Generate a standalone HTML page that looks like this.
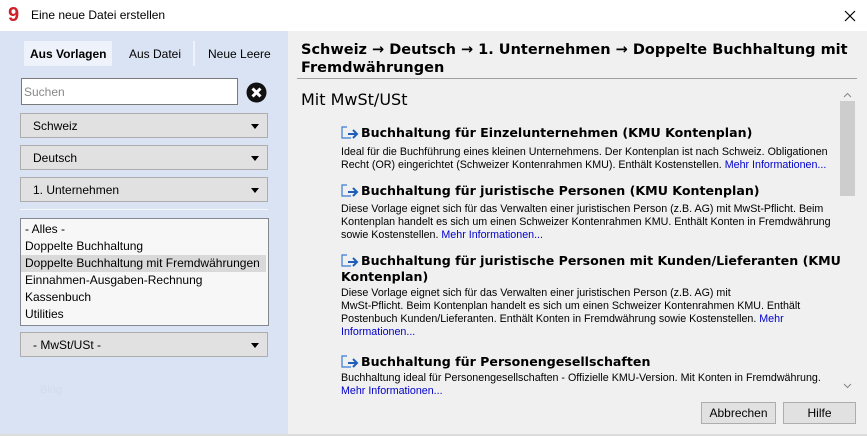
<!DOCTYPE html>
<html><head><meta charset="utf-8"><style>
*{margin:0;padding:0;box-sizing:border-box}
body{width:867px;height:436px;overflow:hidden;background:#f0f0f0;font-family:"DejaVu Sans","Liberation Sans",sans-serif;font-size:12px;color:#000;position:relative}
.a{position:absolute;white-space:nowrap}
.t{font-family:"Liberation Sans",sans-serif}
.dd{position:absolute;left:20px;width:248px;height:25px;background:#e1e1e1;border:1px solid #adadad;font-family:"Liberation Sans",sans-serif;font-size:12px;padding:5px 0 0 12px}
.dd:after{content:"";position:absolute;right:8px;top:10px;border-left:4px solid transparent;border-right:4px solid transparent;border-top:5px solid #000}
.ti{position:absolute;left:341px;font-weight:bold;font-size:12.6px;line-height:15px;white-space:nowrap}
.ti svg{position:absolute;left:0;top:1px}
.ds{position:absolute;left:341px;font-family:"Liberation Sans",sans-serif;font-size:10.7px;line-height:13px;white-space:nowrap}
.ds a{color:#0000cc;text-decoration:none}
.btn{position:absolute;top:402px;height:22px;background:#e1e1e1;border:1px solid #adadad;font-family:"Liberation Sans",sans-serif;font-size:12px;text-align:center;line-height:20px}
</style></head><body>
<div class="a" style="left:0;top:0;width:867px;height:31px;background:#fff"></div>
<div class="a" style="left:8px;top:5px;font:bold 20px 'Liberation Sans',sans-serif;color:#d0202a;line-height:20px">9</div>
<div class="a t" style="left:31px;top:8px;font-size:12px">Eine neue Datei erstellen</div>
<svg class="a" style="left:844px;top:10px" width="12" height="12"><path d="M1 1L11 11M11 1L1 11" stroke="#000" stroke-width="1.2"/></svg>

<div class="a" style="left:0;top:31px;width:288px;height:404px;background:#dae3f3"></div>
<div class="a" style="left:24px;top:41px;width:88px;height:25px;background:#eef2fa"></div>
<div class="a t" style="left:30px;top:47px;font-weight:bold;font-size:12px">Aus Vorlagen</div>
<div class="a t" style="left:129px;top:47px;font-size:12px">Aus Datei</div>
<div class="a" style="left:193px;top:41px;width:2px;height:25px;background:#eef2fa"></div>
<div class="a t" style="left:208px;top:47px;font-size:12px">Neue Leere</div>
<div class="a t" style="left:21px;top:78px;width:217px;height:27px;background:#fff;border:1px solid #7a7a7a;padding:6px 0 0 2px;color:#888;font-size:12px">Suchen</div>
<svg class="a" style="left:246px;top:82px" width="21" height="21"><circle cx="10.5" cy="10.5" r="10" fill="#111"/><path d="M6.5 6.5L14.5 14.5M14.5 6.5L6.5 14.5" stroke="#fff" stroke-width="3"/></svg>
<div class="dd" style="top:113px">Schweiz</div>
<div class="dd" style="top:145px">Deutsch</div>
<div class="dd" style="top:177px">1. Unternehmen</div>
<div class="a" style="left:20px;top:209px;width:248px;height:1px;background:#f4f6fa"></div>
<div class="a t" style="left:20px;top:218px;width:249px;height:108px;background:#f7f7f7;border:1px solid #828790;font-size:12px;line-height:17px;padding:2px 0 0 0">
<div style="padding-left:4px">- Alles -</div>
<div style="padding-left:4px">Doppelte Buchhaltung</div>
<div style="padding-left:4px;background:#d9d9d9;margin-right:2px">Doppelte Buchhaltung mit Fremdwährungen</div>
<div style="padding-left:4px">Einnahmen-Ausgaben-Rechnung</div>
<div style="padding-left:4px">Kassenbuch</div>
<div style="padding-left:4px">Utilities</div>
</div>
<div class="dd" style="top:332px">- MwSt/USt -</div>
<div class="a t" style="left:40px;top:384px;font-size:11px;color:#d2dbec">Blog</div>

<div class="a" style="left:301px;top:41px;font-weight:bold;font-size:14.5px;line-height:18px">Schweiz → Deutsch → 1. Unternehmen → Doppelte Buchhaltung mit<br>Fremdwährungen</div>
<div class="a" style="left:297px;top:78px;width:560px;height:1px;background:#a0a0a0"></div>
<div class="a" style="left:301px;top:90px;font-size:16px;font-family:'DejaVu Sans',sans-serif">Mit MwSt/USt</div>
<div class="a" style="left:839px;top:85px;width:17px;height:313px;background:#f0f0f0"></div>
<div class="a" style="left:840px;top:101px;width:15px;height:95px;background:#cdcdcd"></div>
<svg class="a" style="left:843px;top:92px" width="9" height="6"><path d="M1 5L4.5 1.5L8 5" stroke="#888" fill="none"/></svg>
<svg class="a" style="left:843px;top:383px" width="9" height="6"><path d="M1 1L4.5 4.5L8 1" stroke="#888" fill="none"/></svg>

<div class="ti" style="top:125px;padding-left:20px"><svg width="18" height="14"><path d="M6 1H1V12H10" stroke="#3a7bd5" fill="none" stroke-width="1.2"/><path d="M7 8H16M12 4L16 8L12 12" stroke="#1f5fb8" fill="none" stroke-width="2"/></svg>Buchhaltung für Einzelunternehmen (KMU Kontenplan)</div>
<div class="ds" style="top:146px">Ideal für die Buchführung eines kleinen Unternehmens. Der Kontenplan ist nach Schweiz. Obligationen<br>Recht (OR) eingerichtet (Schweizer Kontenrahmen KMU). Enthält Kostenstellen. <a>Mehr Informationen...</a></div>

<div class="ti" style="top:183px;padding-left:20px"><svg width="18" height="14"><path d="M6 1H1V12H10" stroke="#3a7bd5" fill="none" stroke-width="1.2"/><path d="M7 8H16M12 4L16 8L12 12" stroke="#1f5fb8" fill="none" stroke-width="2"/></svg>Buchhaltung für juristische Personen (KMU Kontenplan)</div>
<div class="ds" style="top:203px">Diese Vorlage eignet sich für das Verwalten einer juristischen Person (z.B. AG) mit MwSt-Pflicht. Beim<br>Kontenplan handelt es sich um einen Schweizer Kontenrahmen KMU. Enthält Konten in Fremdwährung<br>sowie Kostenstellen. <a>Mehr Informationen...</a></div>

<div class="ti" style="top:253px;padding-left:20px"><svg width="18" height="14"><path d="M6 1H1V12H10" stroke="#3a7bd5" fill="none" stroke-width="1.2"/><path d="M7 8H16M12 4L16 8L12 12" stroke="#1f5fb8" fill="none" stroke-width="2"/></svg>Buchhaltung für juristische Personen mit Kunden/Lieferanten (KMU</div>
<div class="ti" style="top:269px">Kontenplan)</div>
<div class="ds" style="top:287px">Diese Vorlage eignet sich für das Verwalten einer juristischen Person (z.B. AG) mit<br>MwSt-Pflicht. Beim Kontenplan handelt es sich um einen Schweizer Kontenrahmen KMU. Enthält<br>Postenbuch Kunden/Lieferanten. Enthält Konten in Fremdwährung sowie Kostenstellen. <a>Mehr<br>Informationen...</a></div>

<div class="ti" style="top:354px;padding-left:20px"><svg width="18" height="14"><path d="M6 1H1V12H10" stroke="#3a7bd5" fill="none" stroke-width="1.2"/><path d="M7 8H16M12 4L16 8L12 12" stroke="#1f5fb8" fill="none" stroke-width="2"/></svg>Buchhaltung für Personengesellschaften</div>
<div class="ds" style="top:372px">Buchhaltung ideal für Personengesellschaften - Offizielle KMU-Version. Mit Konten in Fremdwährung.<br><a>Mehr Informationen...</a></div>

<div class="btn" style="left:701px;width:75px">Abbrechen</div>
<div class="btn" style="left:783px;width:73px">Hilfe</div>
<div class="a" style="left:0;top:434px;width:867px;height:2px;background:#dcdcdc"></div>
</body></html>
